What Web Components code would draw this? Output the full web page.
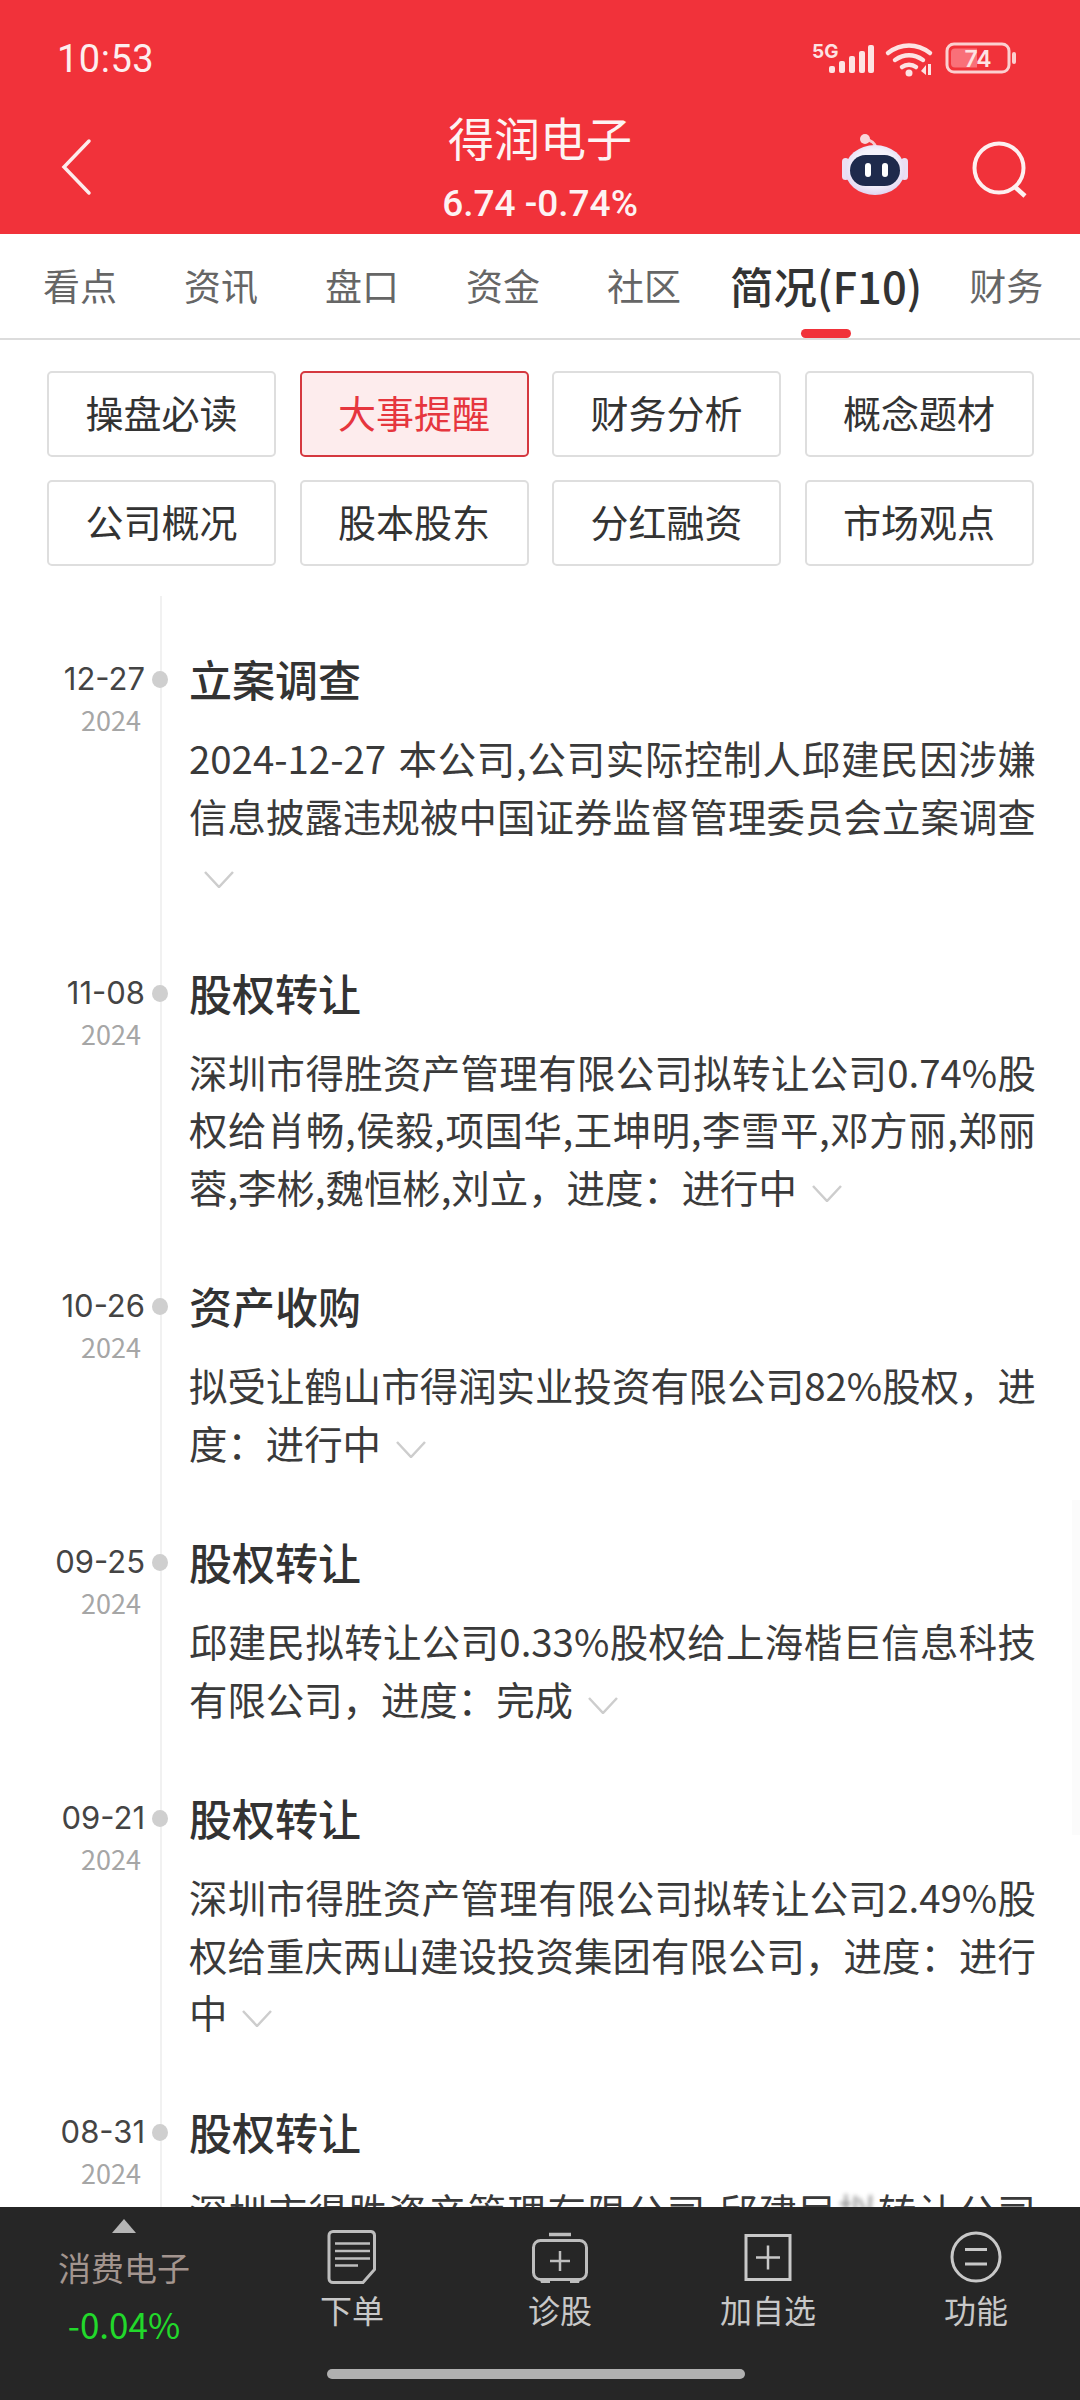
<!DOCTYPE html>
<html lang="zh-CN"><head><meta charset="utf-8"><title>得润电子</title>
<style>
html,body{margin:0;padding:0;background:#fff}
body{font-family:"Noto Sans CJK SC","Noto Sans",sans-serif;color:#333}
</style></head>
<body>
<app-screen>
  <stock-header></stock-header>
  <tab-strip>
    <tab-item>看点</tab-item><tab-item>资讯</tab-item><tab-item>盘口</tab-item><tab-item>资金</tab-item><tab-item>社区</tab-item><tab-item active>简况(F10)</tab-item><tab-item>财务</tab-item>
  </tab-strip>
  <chip-grid>
    <chip-item>操盘必读</chip-item><chip-item active>大事提醒</chip-item><chip-item>财务分析</chip-item><chip-item>概念题材</chip-item>
    <chip-item>公司概况</chip-item><chip-item>股本股东</chip-item><chip-item>分红融资</chip-item><chip-item>市场观点</chip-item>
  </chip-grid>
  <event-list>
    <event-item date="12-27" year="2024" heading="立案调查">
      <event-line>2024-12-27 本公司,公司实际控制人邱建民因涉嫌</event-line>
      <event-line>信息披露违规被中国证券监督管理委员会立案调查</event-line>
      <event-line last><event-chevron></event-chevron></event-line>
    </event-item>
    <event-item date="11-08" year="2024" heading="股权转让">
      <event-line>深圳市得胜资产管理有限公司拟转让公司0.74%股</event-line>
      <event-line>权给肖畅,侯毅,项国华,王坤明,李雪平,邓方丽,郑丽</event-line>
      <event-line last>蓉,李彬,魏恒彬,刘立&#xFF0C;进度&#xFF1A;进行中<event-chevron></event-chevron></event-line>
    </event-item>
    <event-item date="10-26" year="2024" heading="资产收购">
      <event-line>拟受让鹤山市得润实业投资有限公司82%股权&#xFF0C;进</event-line>
      <event-line last>度&#xFF1A;进行中<event-chevron></event-chevron></event-line>
    </event-item>
    <event-item date="09-25" year="2024" heading="股权转让">
      <event-line>邱建民拟转让公司0.33%股权给上海楷巨信息科技</event-line>
      <event-line last>有限公司&#xFF0C;进度&#xFF1A;完成<event-chevron></event-chevron></event-line>
    </event-item>
    <event-item date="09-21" year="2024" heading="股权转让">
      <event-line>深圳市得胜资产管理有限公司拟转让公司2.49%股</event-line>
      <event-line>权给重庆两山建设投资集团有限公司&#xFF0C;进度&#xFF1A;进行</event-line>
      <event-line last>中<event-chevron></event-chevron></event-line>
    </event-item>
    <event-item date="08-31" year="2024" heading="股权转让">
      <event-line>深圳市得胜资产管理有限公司,邱建民<blur-char>拟</blur-char>转让公司</event-line>
    </event-item>
  </event-list>
  <bottom-dock>
    <dock-action label="下单"><svg viewBox="0 0 60 60" width="60" height="60" fill="none" stroke="#bdbdbd" stroke-width="3"><path d="M11 4.500h38a4 4 0 0 1 3.500 4V42.500L41 55.500H11a4 4 0 0 1-4-4V8.500a4 4 0 0 1 4-4z"/><path d="M13 16.500h35M13 24h35M13 31.500h35M13 38.500h23" stroke-width="2.500"/></svg></dock-action>
    <dock-action label="诊股"><svg viewBox="0 0 60 60" width="60" height="60" fill="none" stroke="#bdbdbd" stroke-width="3"><path d="M19 7.500h22" stroke-width="3.500"/><rect x="3.500" y="13.500" width="53" height="39" rx="7"/><path d="M30 24v20M20 34h20" stroke-width="2.500"/><path d="M10 53h10v3H11zM40 53h10l-1 3H40z" fill="#bdbdbd" stroke="none"/></svg></dock-action>
    <dock-action label="加自选"><svg viewBox="0 0 60 60" width="60" height="60" fill="none" stroke="#c8c8c8" stroke-width="3"><rect x="8" y="8.500" width="44" height="44"/><path d="M30 18.500v24M18 30.500h24" stroke-width="2.500"/></svg></dock-action>
    <dock-action label="功能"><svg viewBox="0 0 60 60" width="60" height="60" fill="none" stroke="#c8c8c8" stroke-width="3"><circle cx="30" cy="30" r="24"/><path d="M19 22.500h22M19 37h22" stroke-width="3"/></svg></dock-action>
  </bottom-dock>
</app-screen>
<script>
function def(name, html, setup){
  customElements.define(name, class extends HTMLElement{
    connectedCallback(){
      if(this.shadowRoot) return;
      const r=this.attachShadow({mode:'open'});
      r.innerHTML = typeof html==='function' ? html(this) : html;
      if(setup) setup(this,r);
    }
  });
}
def('app-screen',`<style>:host{display:flex;flex-direction:column;width:1080px;height:2400px;overflow:hidden;background:#fff}</style><slot></slot>`);

def('stock-header',`<style>
:host{display:block;height:234px;background:#f1323a;color:#fff}
.status{height:100px;display:flex;justify-content:space-between;align-items:flex-start;box-sizing:border-box;padding:35px 64px 0 57px}
.time{font:400 38px/48px Roboto,sans-serif;letter-spacing:.5px;color:#fdeeee}
.nav{display:grid;grid-template-columns:1fr auto 1fr;align-items:start}
.back{margin:38px 0 0 58px;display:block}
.mid{text-align:center;padding-top:5px}
.name{font-size:46px;line-height:62px;color:#fdf3f3}
.price{font-size:37px;line-height:48px;margin-top:13px;font-weight:500;white-space:nowrap;color:#fdf3f3;font-family:Roboto,"Noto Sans",sans-serif}
.act{display:flex;justify-content:flex-end;padding:41px 51px 0 0;gap:61px;align-items:flex-start}
svg{display:block}
</style>
<div class="status"><span class="time">10:53</span>
<svg width="204" height="36" viewBox="0 0 204 36" style="margin-top:7px">
 <text x="0" y="16" font-family="Inter,sans-serif" font-weight="700" font-size="19" fill="#fde3e3">5G</text>
 <g fill="#fde3e3"><rect x="17" y="24" width="6" height="7" rx="2"/><rect x="27" y="19" width="6" height="12" rx="2"/><rect x="37" y="14" width="6" height="17" rx="2"/><rect x="47" y="9" width="6" height="22" rx="2"/><rect x="56" y="3" width="6" height="28" rx="2"/></g>
 <g fill="none" stroke="#fde3e3" stroke-width="4.500" stroke-linecap="round"><path d="M76 11c13-10 29-10 42 0"/><path d="M83 18c9-6 19-6 28 0"/><path d="M90 25c4-3 10-3 14 0"/></g>
 <circle cx="97" cy="31" r="3.500" fill="#fde3e3"/><path d="M109 32l5-6v10zM116 25h3v11h-3z" fill="#fde3e3" transform="translate(0,-3)"/>
 <rect x="135" y="2" width="62" height="28" rx="7" fill="none" stroke="#fbd0d0" stroke-width="3"/>
 <path d="M143 6.500h22v19h-22a4 4 0 0 1-4-4v-11a4 4 0 0 1 4-4z" fill="#f97079"/>
 <text x="166" y="25" text-anchor="middle" font-family="Inter,sans-serif" font-weight="600" font-size="23" fill="#fde3e3">74</text>
 <rect x="200" y="10" width="4" height="12" rx="2" fill="#fbd0d0"/>
</svg></div>
<div class="nav">
 <svg class="back" width="36" height="58" viewBox="0 0 36 58" fill="none" stroke="#fdecec" stroke-width="3.500" stroke-linecap="round"><path d="M31 3L6 29l25 26"/></svg>
 <div class="mid"><div class="name">得润电子</div><div class="price">6.74 -0.74%</div></div>
 <div class="act">
  <svg width="70" height="66" viewBox="0 0 70 66" style="margin-top:-8px">
   <defs><radialGradient id="h" cx=".5" cy=".45" r=".6"><stop offset=".6" stop-color="#f4f2fb"/><stop offset="1" stop-color="#dccdee"/></radialGradient></defs>
   <path d="M26 7c5 0 9 3 10 8" fill="none" stroke="#f6c9cf" stroke-width="3"/><circle cx="25" cy="6" r="5" fill="#f9d6da"/>
   <rect x="2" y="25" width="7" height="22" rx="3.500" fill="#ecdff3"/><rect x="61" y="25" width="7" height="22" rx="3.500" fill="#ecdff3"/>
   <ellipse cx="35" cy="37" rx="30" ry="25" fill="url(#h)"/>
   <rect x="10" y="22" width="50" height="31" rx="15.500" fill="#1e2a4c"/>
   <rect x="25" y="30" width="6" height="14" rx="3" fill="#fff"/><rect x="42" y="30" width="6" height="14" rx="3" fill="#fff"/>
  </svg>
  <svg width="58" height="58" viewBox="0 0 58 58" fill="none" stroke="#fdf0f0" stroke-width="4"><circle cx="28" cy="27" r="24.500"/><path d="M44 46l10 9" stroke-width="4.500"/></svg>
 </div>
</div>`);

def('tab-strip',`<style>:host{display:flex;height:106px;box-sizing:border-box;border-bottom:2px solid #dcdcdc;padding-left:43px;overflow:hidden;white-space:nowrap}</style><slot></slot>`);
def('tab-item',`<style>
:host{display:block;position:relative;margin-right:67px;font-size:37px;line-height:103px;height:104px;color:#666;flex:none}
:host([active]){font-size:43.5px;font-weight:500;color:#333;margin:0 47px 0 -18px;line-height:103px}
.bar{display:none;position:absolute;left:71px;bottom:0;width:50px;height:9px;border-radius:5px;background:#f1323a}
:host([active]) .bar{display:block}
</style><slot></slot><div class="bar"></div>`);

def('chip-grid',`<style>:host{display:grid;grid-template-columns:repeat(4,229px);gap:23px 23.5px;padding:31px 47px 30px;flex:none}</style><slot></slot>`);
def('chip-item',`<style>
:host{display:flex;align-items:center;justify-content:center;height:86px;box-sizing:border-box;border:2px solid #dedede;border-radius:5px;font-size:38px;color:#333;padding-bottom:5px}
:host([active]){border-color:#d5383f;background:#fdeced;color:#e6363e}
</style><slot></slot>`);

def('event-list',`<style>:host{display:block;flex:1;min-height:0;overflow:hidden;position:relative}
.track{position:absolute;right:0;top:904px;width:8px;height:335px;background:#fbfbfb}</style><slot></slot><div class="track"></div>`);
def('event-item',el=>`<style>
:host{display:flex;position:relative}
.when{width:160px;flex:none;padding-top:63px;text-align:right;box-sizing:border-box}
.d{font:400 31px/40px Inter,"Noto Sans CJK SC",sans-serif;color:#444;padding-right:15px}
.y{font-size:27px;line-height:40px;color:#a6a6a6;padding-right:19px;margin-top:1px}
.dot{position:absolute;left:152px;top:75px;width:16px;height:17px;border-radius:50%;background:#cfcfcf}
.main{flex:1;border-left:2px solid #f1f1f1;padding:52px 44px 8px 27px;min-width:0}
h3{margin:0 0 21px;font-size:43px;line-height:60px;font-weight:500;color:#333}
</style><div class="when"><div class="d">${el.getAttribute('date')}</div><div class="y">${el.getAttribute('year')}</div></div><div class="dot"></div><div class="main"><h3>${el.getAttribute('heading')}</h3><slot></slot></div>`);
def('event-line',`<style>
:host{display:block;font-size:38.4px;line-height:57.5px;height:57.5px;color:#3a3a3a;text-align:justify;text-align-last:justify;word-spacing:3px}
:host([last]){text-align:left;text-align-last:left}
</style><slot></slot>`);
def('event-chevron',`<style>:host{display:inline-block;width:30px;height:17px;margin-left:15px;vertical-align:1px}svg{display:block}</style><svg width="30" height="17" viewBox="0 0 30 17" fill="none" stroke="#cdcdcd" stroke-width="2.500"><path d="M1 1l14 15L29 1"/></svg>`);
def('blur-char',`<style>:host{display:inline;filter:blur(2px);opacity:.55}</style><slot></slot>`);

def('bottom-dock',`<style>
:host{display:block;height:193px;background:#262626;flex:none;position:relative}
.row{display:flex;height:162px}
.sector{width:248px;flex:none;box-sizing:border-box;padding-top:12px;text-align:center}
.tri{width:0;height:0;margin:0 auto;border:12px solid transparent;border-top:0;border-bottom:14px solid #b5b5b5}
.n{font-size:33px;line-height:44px;color:#a3958f;margin-top:12px}
.v{font-size:35px;line-height:44px;color:#22d92b;margin-top:13px}
.acts{display:grid;grid-template-columns:repeat(4,208px)}
.home{width:418px;height:10px;border-radius:5px;background:#b0b0b0;margin:0 0 0 327px}
</style><div class="row"><div class="sector"><div class="tri"></div><div class="n">消费电子</div><div class="v">-0.04%</div></div><div class="acts"><slot></slot></div></div><div class="home"></div>`);
def('dock-action',el=>`<style>
:host{display:flex;flex-direction:column;align-items:center;padding-top:20px;color:#c8c8c8}
.t{font-size:32px;line-height:44px;margin-top:0;color:#c8c8c8}
</style><slot></slot><div class="t">${el.getAttribute('label')}</div>`);
</script>
</body></html>
